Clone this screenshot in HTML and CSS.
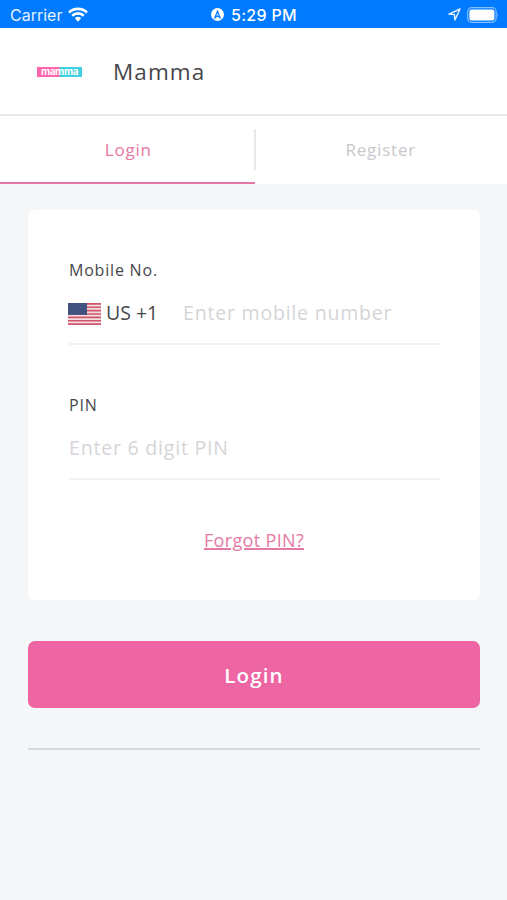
FILE: index.html
```html
<!DOCTYPE html>
<html lang="en">
<head>
    <meta charset="utf-8">
    <title>Mamma</title>
    <link rel="stylesheet" href="styles.css">
</head>
<body>
    <div class="statusBar">
        <div class="carrier">
            <span>Carrier</span>
            <svg width="20" height="15" viewBox="0 0 20 15" fill="none" stroke="#fff" stroke-width="2.7">
                <path d="M1 5.4a13.2 13.2 0 0 1 18 0M4.2 8.7a8.6 8.6 0 0 1 11.6 0"/>
                <path d="M6.8 11.3a4.7 4.7 0 0 1 6.4 0L10 14.7z" fill="#fff" stroke="none"/>
            </svg>
        </div>
        <div class="clock">
            <svg width="13" height="13" viewBox="0 0 13 13">
                <circle cx="6.5" cy="6.5" r="6.5" fill="#fff"/>
                <path d="M4 9.6L6.5 3.2L9 9.6L6.5 8z" fill="none" stroke="#007aff" stroke-width="1.3"/>
            </svg>
            <span>5:29 PM</span>
        </div>
        <div class="battery">
            <svg width="13" height="13" viewBox="0 0 13 13" fill="none" stroke="#e5f1ff" stroke-width="1.5" stroke-linejoin="round">
                <path d="M12 1L1 6.1l5.4.5.5 5.4z"/>
            </svg>
            <svg width="32" height="16" viewBox="0 0 32 16">
                <rect x=".7" y=".7" width="28.4" height="14.6" rx="4" fill="none" stroke="#86bfff" stroke-width="1.2"/>
                <rect x="2.4" y="2.4" width="25" height="11.2" rx="2.4" fill="#fff"/>
                <path d="M30.3 5.5q1.6 2.5 0 5z" fill="#86bfff"/>
            </svg>
        </div>
    </div>

    <header class="header">
        <div class="logo"><span>mamma</span></div>
        <h1>Mamma</h1>
    </header>

    <nav class="tabs">
        <a class="tab active">Login</a>
        <a class="tab">Register</a>
    </nav>

    <main>
        <section class="card">
            <div class="label">Mobile No.</div>
            <div class="field">
                <svg class="flag" width="33" height="22" viewBox="0 0 33 22">
                    <path fill="#f2dfe3" d="M0 0h33v22H0z"/>
                    <path stroke="#d2566a" stroke-width="1.69" d="M0 .85h33M0 4.23h33M0 7.61h33M0 11h33M0 14.39h33M0 17.77h33M0 21.15h33"/>
                    <path fill="#3f517e" d="M0 0h19v11.85H0z"/>
                    <path stroke="#516189" stroke-width=".8" stroke-dasharray="1 2" d="M1.5 2h16M3 4.6h14M1.5 7.2h16M3 9.8h14"/>
                </svg>
                <span class="country">US +1</span>
                <span class="placeholder">Enter mobile number</span>
            </div>
            <div class="label pinLabel">PIN</div>
            <div class="field">
                <span class="placeholder">Enter 6 digit PIN</span>
            </div>
            <a class="forgot">Forgot PIN?</a>
        </section>
        <button class="submit">Login</button>
        <hr>
    </main>
</body>
</html>
```
FILE: styles.css
```css
* {
    box-sizing: border-box;
}

body {
    margin: 0;
    min-height: 900px;
    background: #f5f6f8;
    color: #47474b;
    font-family: "Open Sans", "Noto Sans", sans-serif;
    white-space: nowrap;
}

.statusBar {
    display: grid;
    grid-template-columns: 1fr auto 1fr;
    align-items: center;
    height: 28px;
    padding: 1px 8px 0 10px;
    background: #007aff;
    color: #fff;
    font: 16px/26px Inter, sans-serif;
}

.carrier, .clock, .battery {
    display: flex;
    align-items: center;
}

.carrier {
    gap: 6px;
    color: #e5f1ff;
}

.clock {
    gap: 7px;
    margin-right: 1px;
    font-weight: 500;
    letter-spacing: .3px;
}

.battery {
    justify-content: flex-end;
    gap: 6px;
}

.header {
    display: flex;
    align-items: center;
    height: 88px;
    padding: 0 37px;
    background: #fff;
    border-bottom: 2px solid #e7e7e8;
}

.logo {
    display: flex;
    align-items: center;
    justify-content: center;
    width: 45px;
    height: 10px;
    margin: 1px 31px 0 0;
    background: linear-gradient(90deg, #ff65ac 0 48%, #40d1e0 52%);
    color: #fff;
    font: bold 10px/10px Inter, sans-serif;
    letter-spacing: -.35px;
}

.logo span {
    margin-top: -2px;
}

h1 {
    margin: 0;
    font-size: 22.5px;
    font-weight: 400;
    letter-spacing: 1.1px;
}

.tabs {
    display: flex;
    height: 68px;
    background: #fff;
}

.tab {
    position: relative;
    display: flex;
    justify-content: center;
    flex: 1;
    padding-top: 21px;
    color: #c7c7c9;
    font-size: 17px;
    line-height: 26px;
    letter-spacing: .8px;
}

.tab.active {
    padding-left: 2px;
    color: #e579a5;
    border-bottom: 2px solid #e579a5;
}

.tab.active::after {
    content: "";
    position: absolute;
    top: 13px;
    right: -1px;
    width: 2px;
    height: 41px;
    background: #e7e7e8;
}

main {
    padding: 26px 27px 0 28px;
}

.card {
    height: 390px;
    padding: 46px 40px 0;
    background: #fff;
    border-radius: 6px;
}

.label {
    height: 28px;
    margin-left: 1px;
    font-size: 16px;
    line-height: 28px;
    letter-spacing: .8px;
}

.field {
    display: flex;
    align-items: center;
    height: 61px;
    margin-left: 1px;
    padding-bottom: 2px;
    border-bottom: 2px solid #f1f1f2;
    font-size: 19.5px;
    line-height: 30px;
}

.flag {
    margin: 3px 5px 0 -1px;
}

.country {
    width: 77px;
}

.placeholder {
    color: #d5d5d7;
    letter-spacing: .8px;
}

.pinLabel {
    margin-top: 46px;
}

.forgot {
    display: block;
    width: max-content;
    margin: 46px auto 0;
    color: #e579a5;
    font-size: 18px;
    line-height: 28px;
    letter-spacing: .35px;
    text-decoration: underline;
    text-decoration-thickness: 2px;
    text-underline-offset: 1px;
}

.submit {
    display: block;
    width: 100%;
    height: 67px;
    margin-top: 41px;
    padding: 0;
    border: 0;
    border-radius: 7px;
    background: #ed65a2;
    color: #fff;
    font: 600 20.5px/28px "Open Sans", sans-serif;
    letter-spacing: 1.1px;
}

hr {
    height: 2px;
    margin: 40px 0 0;
    border: 0;
    background: #d7d9db;
}
```
